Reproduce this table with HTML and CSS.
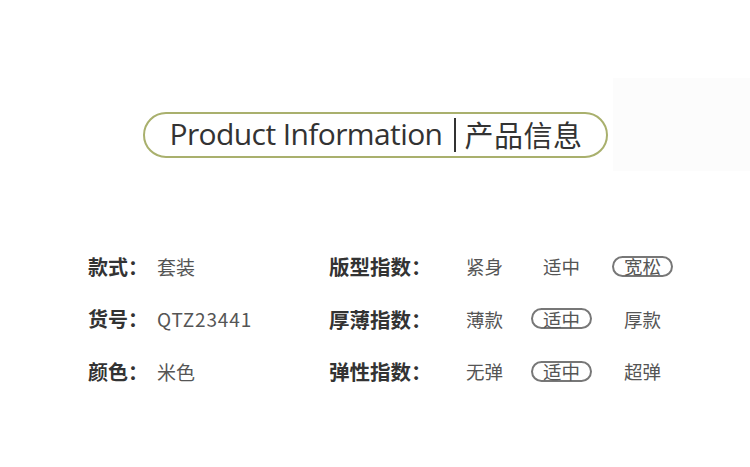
FILE: index.html
```html
<!DOCTYPE html>
<html lang="zh">
<head>
<meta charset="utf-8">
<link rel="stylesheet" href="styles.css">
</head>
<body>
<div class="page">
  <div class="shade"></div>
  <header class="header">
    <div class="title-pill">
      <span class="title-en">Product Information</span>
      <span class="sep"></span>
      <span class="title-cn">产品信息</span>
    </div>
  </header>
  <section class="info">
    <div class="row">
      <div class="left"><span class="label">款式：</span><span class="value">套装</span></div>
      <div class="right"><span class="label rlabel">版型指数：</span>
        <div class="opts"><span class="opt">紧身</span><span class="opt">适中</span><span class="opt on">宽松</span></div>
      </div>
    </div>
    <div class="row">
      <div class="left"><span class="label">货号：</span><span class="value code">QTZ23441</span></div>
      <div class="right"><span class="label rlabel">厚薄指数：</span>
        <div class="opts"><span class="opt">薄款</span><span class="opt on">适中</span><span class="opt">厚款</span></div>
      </div>
    </div>
    <div class="row">
      <div class="left"><span class="label">颜色：</span><span class="value">米色</span></div>
      <div class="right"><span class="label rlabel">弹性指数：</span>
        <div class="opts"><span class="opt">无弹</span><span class="opt on">适中</span><span class="opt">超弹</span></div>
      </div>
    </div>
  </section>
</div>
</body>
</html>
```
FILE: styles.css
```css
html, body {
  margin: 0;
  padding: 0;
  background: #ffffff;
}
.page {
  position: relative;
  width: 750px;
  height: 467px;
  overflow: hidden;
  font-family: "Noto Sans CJK SC", "Noto Sans", sans-serif;
}
.shade {
  position: absolute;
  left: 613px;
  top: 78px;
  width: 137px;
  height: 93px;
  background: #fcfcfc;
}
.header {
  position: relative;
  display: flex;
  justify-content: center;
  padding-top: 112px;
}
.title-pill {
  box-sizing: border-box;
  height: 46px;
  width: 465px;
  border: 2px solid #a9b06d;
  border-radius: 23px;
  display: flex;
  align-items: center;
  padding-left: 25px;
  padding-bottom: 2px;
  color: #333333;
}
.title-en {
  font-family: "Open Sans", "Noto Sans", sans-serif;
  font-size: 30px;
  letter-spacing: -0.6px;
  line-height: 1;
}
.sep {
  width: 2px;
  height: 34px;
  background: #333333;
  margin: 2px 8px 0 12px;
}
.title-cn {
  font-size: 29px;
  line-height: 1;
  letter-spacing: 0.5px;
}
.info {
  position: relative;
  padding-top: 240px;
  margin-top: -158px;
  padding-left: 88px;
}
.row {
  display: flex;
  align-items: center;
  height: 52.5px;
}
.left {
  display: flex;
  align-items: center;
  width: 241px;
}
.label {
  font-size: 20px;
  font-weight: 700;
  color: #333333;
  width: 69px;
}
.value {
  font-size: 19px;
  color: #555555;
}
.value.code {
  letter-spacing: 0.9px;
}
.right {
  display: flex;
  align-items: center;
}
.rlabel {
  width: 125px;
  font-size: 20.5px;
}
.opts {
  display: grid;
  grid-template-columns: 77px 81px 61px;
}
.opt {
  box-sizing: border-box;
  width: 61px;
  height: 21px;
  display: flex;
  align-items: center;
  justify-content: center;
  font-size: 18.5px;
  color: #555555;
  border: 2px solid transparent;
  border-radius: 11px;
}
.opt.on {
  border-color: #777777;
}
```
